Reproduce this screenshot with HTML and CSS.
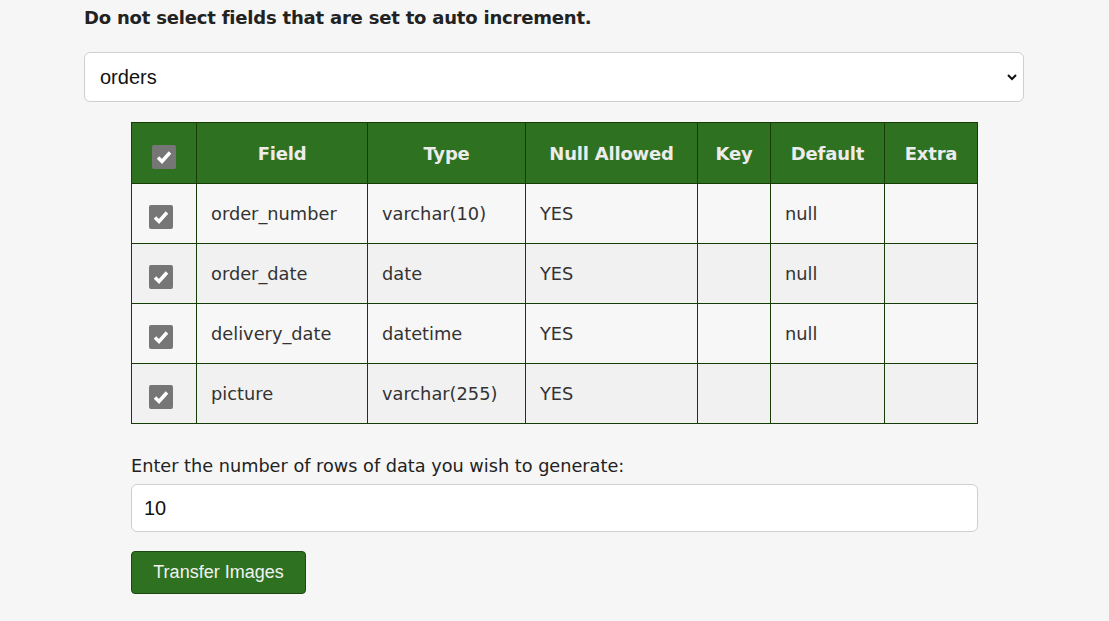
FILE: index.html
```html
<!DOCTYPE html>
<html>
<head>
<meta charset="utf-8">
<link rel="stylesheet" href="styles.css">
</head>
<body>
<div class="page">
  <h3 class="notice">Do not select fields that are set to auto increment.</h3>
  <div class="select-wrap">
    <div class="select">
      <span>orders</span>
      <svg class="chev" width="10" height="8" viewBox="0 0 10 8"><path d="M1 2 L5 6 L9 2" fill="none" stroke="#111" stroke-width="2"/></svg>
    </div>
  </div>
  <div class="inner">
    <table class="fields">
      <thead>
        <tr>
          <th class="c-chk"><span class="cb"><svg viewBox="0 0 24 24" width="24" height="24"><path d="M6 12.5 L10 16.5 L18 7.5" fill="none" stroke="#fff" stroke-width="3.5"/></svg></span></th>
          <th class="c-field">Field</th>
          <th class="c-type">Type</th>
          <th class="c-null">Null Allowed</th>
          <th class="c-key">Key</th>
          <th class="c-def">Default</th>
          <th class="c-extra">Extra</th>
        </tr>
      </thead>
      <tbody>
        <tr>
          <td class="c-chk"><span class="cb"><svg viewBox="0 0 24 24" width="24" height="24"><path d="M6 12.5 L10 16.5 L18 7.5" fill="none" stroke="#fff" stroke-width="3.5"/></svg></span></td>
          <td>order_number</td><td>varchar(10)</td><td>YES</td><td></td><td>null</td><td></td>
        </tr>
        <tr>
          <td class="c-chk"><span class="cb"><svg viewBox="0 0 24 24" width="24" height="24"><path d="M6 12.5 L10 16.5 L18 7.5" fill="none" stroke="#fff" stroke-width="3.5"/></svg></span></td>
          <td>order_date</td><td>date</td><td>YES</td><td></td><td>null</td><td></td>
        </tr>
        <tr>
          <td class="c-chk"><span class="cb"><svg viewBox="0 0 24 24" width="24" height="24"><path d="M6 12.5 L10 16.5 L18 7.5" fill="none" stroke="#fff" stroke-width="3.5"/></svg></span></td>
          <td>delivery_date</td><td>datetime</td><td>YES</td><td></td><td>null</td><td></td>
        </tr>
        <tr>
          <td class="c-chk"><span class="cb"><svg viewBox="0 0 24 24" width="24" height="24"><path d="M6 12.5 L10 16.5 L18 7.5" fill="none" stroke="#fff" stroke-width="3.5"/></svg></span></td>
          <td>picture</td><td>varchar(255)</td><td>YES</td><td></td><td></td><td></td>
        </tr>
      </tbody>
    </table>
    <label class="rows-label">Enter the number of rows of data you wish to generate:</label>
    <div class="input">10</div>
    <button class="btn">Transfer Images</button>
  </div>
</div>
</body>
</html>
```

FILE: styles.css
```css
html, body {
  margin: 0;
  padding: 0;
  background: #f6f6f6;
}
body {
  font-family: "DejaVu Sans", Verdana, sans-serif;
  color: #222;
}
.page {
  padding: 0 85px 0 84px;
}
.notice {
  margin: 0;
  padding-top: 7px;
  height: 52px;
  box-sizing: border-box;
  font-size: 18px;
  font-weight: bold;
  color: #222;
  letter-spacing: -0.2px;
}
.select-wrap {
  height: 50px;
}
.select {
  height: 50px;
  box-sizing: border-box;
  background: #fff;
  border: 1px solid #cfcfcf;
  border-radius: 6px;
  display: flex;
  align-items: center;
  justify-content: space-between;
  padding: 0 6px 0 15px;
  font-family: "Liberation Sans", Arial, sans-serif;
  font-size: 20px;
  color: #111;
}
.chev { display: block; }
.inner {
  padding: 20px 46px 0 47px;
}
.fields {
  border-collapse: collapse;
  width: 846px;
  table-layout: fixed;
}
.fields th, .fields td {
  border: 1px solid #173d07;
  height: 60px;
  box-sizing: border-box;
  padding: 0 0 0 14px;
}
.fields th {
  background: #2e7120;
  color: #ececec;
  font-size: 18px;
  font-weight: bold;
  text-align: center;
  padding: 0;
  height: 61px;
  letter-spacing: -0.2px;
}
.fields td {
  font-size: 17.8px;
  color: #333;
  text-align: left;
}
.fields tbody tr:nth-child(odd) td { background: #f7f7f7; }
.fields tbody tr:nth-child(even) td { background: #f1f1f1; }
.fields td.c-chk { padding: 6px 0 0 17px; }
.fields th.c-chk { padding: 8px 0 0 0; }
.c-chk { width: 65px; }
.c-field { width: 171px; }
.c-type { width: 158px; }
.c-null { width: 172px; }
.c-key { width: 73px; }
.c-def { width: 114px; }
.c-extra { width: 93px; }
.cb {
  display: inline-block;
  width: 24px;
  height: 24px;
  background: #767676;
  border-radius: 2px;
  vertical-align: middle;
}
.cb svg { display: block; }
.rows-label {
  display: block;
  margin-top: 29px;
  font-size: 17.7px;
  color: #222;
  line-height: 26px;
}
.input {
  margin-top: 5px;
  height: 48px;
  box-sizing: border-box;
  background: #fff;
  border: 1px solid #cfcfcf;
  border-radius: 6px;
  display: flex;
  align-items: center;
  padding-left: 12px;
  font-family: "Liberation Sans", Arial, sans-serif;
  font-size: 20px;
  color: #111;
}
.btn {
  margin-top: 19px;
  width: 175px;
  height: 43px;
  background: #2e7120;
  border: 1px solid #1d4a12;
  border-radius: 4px;
  color: #f2f2f2;
  font-family: "Liberation Sans", Arial, sans-serif;
  font-size: 18px;
  padding: 0;
}
```
